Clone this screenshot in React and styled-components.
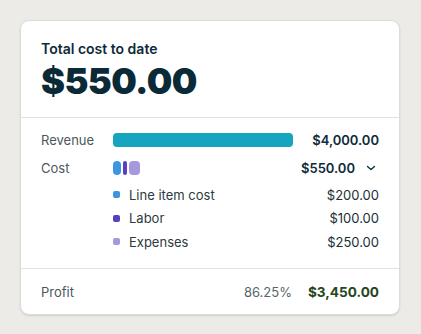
import React from "react";
import styled, { createGlobalStyle } from "styled-components";

const Global = createGlobalStyle`
  html, body { margin: 0; padding: 0; background: #ecebe8; }
  body { font-family: Inter, "Noto Sans", sans-serif; -webkit-font-smoothing: antialiased; }
`;

const Page = styled.div`
  padding: 20px;
  width: 380px;
`;

const Card = styled.div`
  background: #fff;
  border: 1px solid #dcdcd8;
  border-radius: 9px;
  box-shadow: 0 1px 2px rgba(0,0,0,0.12);
  overflow: hidden;
`;

const Header = styled.div`
  padding: 19px 20px 17px;
  border-bottom: 1px solid #e2e2df;
`;

const Title = styled.div`
  font-size: 14px;
  line-height: 17px;
  font-weight: 600;
  color: #0e2b39;
`;

const Big = styled.div`
  margin-top: 6px;
  font-size: 36px;
  line-height: 37px;
  font-weight: 900;
  color: #0b2a37;
  letter-spacing: -0.6px;
`;

const Body = styled.div`
  padding: 11px 20px 14px;
  border-bottom: 1px solid #e2e2df;
`;

const Row = styled.div`
  display: grid;
  grid-template-columns: 72px 180px 1fr;
  align-items: center;
  height: 22px;
  margin-bottom: ${(p) => p.$gap || 0}px;
`;

const Label = styled.div`
  font-size: 13px;
  color: #4b585d;
`;

const Amount = styled.div`
  display: flex;
  justify-content: flex-end;
  align-items: center;
  gap: 10px;
  font-size: 13px;
  font-weight: 600;
  color: #0e2b39;
`;

const Bar = styled.div`
  height: 14px;
  border-radius: 4px;
  background: #17a4be;
`;

const Segs = styled.div`
  display: flex;
  gap: 2px;
  height: 14px;
`;

const Seg = styled.div`
  border-radius: 4px;
  background: ${(p) => p.$color};
`;

const SubList = styled.div`
  margin-top: 4px;
  padding-left: 72px;
`;

const SubRow = styled.div`
  display: flex;
  align-items: center;
  height: 23.5px;
`;

const Dot = styled.span`
  width: 7px;
  height: 7px;
  border-radius: 2px;
  background: ${(p) => p.$color};
  margin-right: 9px;
`;

const SubLabel = styled.span`
  flex: 1;
  font-size: 13px;
  color: #2d3b40;
`;

const SubAmount = styled.span`
  font-size: 13px;
  color: #1a2e36;
`;

const Footer = styled.div`
  display: flex;
  align-items: center;
  height: 22px;
  padding: 12px 20px 11px;
`;

const Pct = styled.span`
  margin-left: auto;
  margin-right: 16px;
  font-size: 13px;
  color: #55656a;
`;

const Profit = styled.span`
  font-size: 13.6px;
  font-weight: 700;
  color: #24461b;
`;

const ChevronSvg = styled.svg`
  margin-right: 2px;
`;

const Chevron = () => (
  <ChevronSvg width="12" height="10" viewBox="0 0 12 10" fill="none">
    <polyline points="2.5,3.5 6,6.5 9.5,3.5" stroke="#0e2b39" strokeWidth="1.3" strokeLinecap="round" strokeLinejoin="round" />
  </ChevronSvg>
);

const items = [
  { label: "Line item cost", amount: "$200.00", color: "#3b95e2", w: 8 },
  { label: "Labor", amount: "$100.00", color: "#5a3fbf", w: 4 },
  { label: "Expenses", amount: "$250.00", color: "#a797dc", w: 11 },
];

export default function App() {
  return (
    <>
      <Global />
      <Page>
        <Card>
          <Header>
            <Title>Total cost to date</Title>
            <Big>$550.00</Big>
          </Header>
          <Body>
            <Row $gap={6}>
              <Label>Revenue</Label>
              <Bar />
              <Amount>$4,000.00</Amount>
            </Row>
            <Row>
              <Label>Cost</Label>
              <Segs>
                {items.map((it) => (
                  <Seg key={it.label} $color={it.color} style={{ width: it.w }} />
                ))}
              </Segs>
              <Amount>
                $550.00 <Chevron />
              </Amount>
            </Row>
            <SubList>
              {items.map((it) => (
                <SubRow key={it.label}>
                  <Dot $color={it.color} />
                  <SubLabel>{it.label}</SubLabel>
                  <SubAmount>{it.amount}</SubAmount>
                </SubRow>
              ))}
            </SubList>
          </Body>
          <Footer>
            <Label>Profit</Label>
            <Pct>86.25%</Pct>
            <Profit>$3,450.00</Profit>
          </Footer>
        </Card>
      </Page>
    </>
  );
}
